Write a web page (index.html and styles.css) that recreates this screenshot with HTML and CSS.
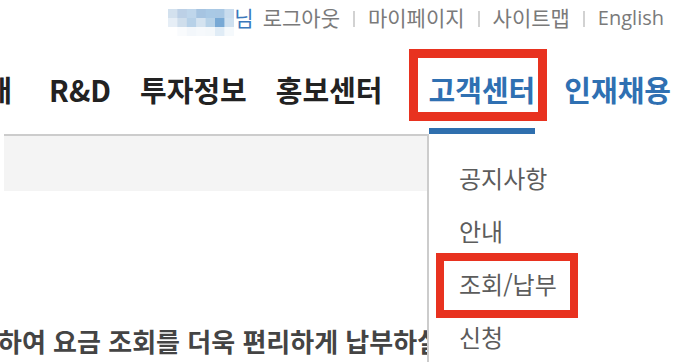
FILE: index.html
```html
<!DOCTYPE html>
<html lang="ko">
<head>
<meta charset="utf-8">
<title>고객센터</title>
<link rel="stylesheet" href="styles.css">
</head>
<body>
<div class="page">
  <div class="util">
    <span class="user">
      <svg class="mosaic" width="66" height="27" viewBox="0 0 66 27">
        <rect x="0" y="0" width="10" height="9" fill="#d3e1ee"/>
        <rect x="9.4" y="0" width="10" height="9" fill="#bcd0e6"/>
        <rect x="18.8" y="0" width="10" height="9" fill="#bfd6eb"/>
        <rect x="28.2" y="0" width="10" height="9" fill="#a6c4e1"/>
        <rect x="37.6" y="0" width="10" height="9" fill="#a9c9e5"/>
        <rect x="47" y="0" width="10" height="9" fill="#a9c8e4"/>
        <rect x="56.4" y="0" width="10" height="9" fill="#c9dcee"/>
        <rect x="0" y="9" width="10" height="9" fill="#e6eef6"/>
        <rect x="9.4" y="9" width="10" height="9" fill="#cfdeec"/>
        <rect x="18.8" y="9" width="10" height="9" fill="#b7d1e8"/>
        <rect x="28.2" y="9" width="10" height="9" fill="#d4e3f0"/>
        <rect x="37.6" y="9" width="10" height="9" fill="#b7d2e8"/>
        <rect x="47" y="9" width="10" height="9" fill="#78a9d5"/>
        <rect x="56.4" y="9" width="10" height="9" fill="#cee0f0"/>
        <rect x="9.4" y="18" width="10" height="9" fill="#f9fbfd"/>
        <rect x="18.8" y="18" width="10" height="9" fill="#f3f7fb"/>
        <rect x="28.2" y="18" width="10" height="9" fill="#f6f9fc"/>
        <rect x="37.6" y="18" width="10" height="9" fill="#f4f8fb"/>
        <rect x="47" y="18" width="10" height="9" fill="#e0ecf6"/>
        <rect x="56.4" y="18" width="10" height="9" fill="#f5f9fc"/>
      </svg><span class="nim">님</span>
    </span>
    <a class="ulink" href="#">로그아웃</a><span class="sep"></span>
    <a class="ulink" href="#">마이페이지</a><span class="sep"></span>
    <a class="ulink" href="#">사이트맵</a><span class="sep"></span>
    <a class="ulink en" href="#">English</a>
  </div>

  <nav class="gnb">
    <a class="gitem" href="#">회사소개</a>
    <a class="gitem rnd" href="#">R&amp;D</a>
    <a class="gitem" href="#">투자정보</a>
    <a class="gitem" href="#">홍보센터</a>
    <a class="gitem active" href="#">고객센터</a>
    <a class="gitem blue" href="#">인재채용</a>
  </nav>

  <div class="subbar"></div>

  <div class="content">
    <p class="lead">모바일 앱을 이용하여 요금 조회를 더욱 편리하게 납부하실 수 있습니다.</p>
  </div>

  <ul class="dropdown">
    <li><a href="#">공지사항</a></li>
    <li><a href="#">안내</a></li>
    <li><a href="#">조회/납부</a></li>
    <li><a href="#">신청</a></li>
  </ul>

  <div class="mark mark-menu"></div>
  <div class="mark mark-sub"></div>
</div>
</body>
</html>
```

FILE: styles.css
```css
html, body {
  margin: 0;
  padding: 0;
  background: #fff;
}
body {
  width: 674px;
  height: 362px;
  overflow: hidden;
  font-family: "Noto Sans CJK KR", "Noto Sans", sans-serif;
}
a { text-decoration: none; }

.page {
  position: relative;
  width: 674px;
  height: 362px;
  overflow: hidden;
}

.util {
  height: 40px;
  box-sizing: border-box;
  padding: 0 10px 5px 0;
  display: flex;
  justify-content: flex-end;
  align-items: center;
  font-size: 21px;
  color: #7a7a7a;
  line-height: 1;
}
.user {
  display: flex;
  align-items: center;
  margin-right: 9px;
}
.mosaic { display: block; margin-top: 9px; }
.nim { color: #3a78bb; }
.ulink { color: #7a7a7a; }
.en { font-family: "Open Sans", "Noto Sans", sans-serif; font-size: 20px; }
.sep {
  display: inline-block;
  width: 2px;
  height: 16px;
  background: #d2d2d2;
  margin: 2px 13px 0;
}

.gnb {
  height: 94px;
  display: flex;
  justify-content: flex-end;
  gap: 29px;
  padding-right: 3px;
  overflow: hidden;
}
.gitem {
  flex: none;
  display: flex;
  align-items: center;
  padding-top: 3px;
  box-sizing: border-box;
  height: 94px;
  font-size: 29px;
  font-weight: 700;
  color: #222;
}
.gitem.rnd { margin-left: 8px; }
.gitem.active {
  margin-left: 17px;
  color: #2f70b2;
  background: linear-gradient(#2f6fae, #2f6fae) no-repeat center bottom / 100% 6px;
}
.gitem.blue { color: #2f70b2; }

.subbar {
  margin-left: 4px;
  height: 55px;
  background: #f4f4f4;
  border-top: 2px solid #ccc;
}

.content {
  padding: 135px 0 0 4px;
}
.lead {
  margin: 0 0 0 -188px;
  white-space: nowrap;
  font-size: 26px;
  font-weight: 700;
  color: #444;
  line-height: 30px;
}

.dropdown {
  position: absolute;
  left: 427px;
  top: 134px;
  width: 260px;
  bottom: 0;
  margin: 0;
  padding: 17px 0 0 30px;
  list-style: none;
  background: #fff;
  border-left: 2px solid #ccc;
}
.dropdown li {
  height: 53px;
  line-height: 53px;
  font-size: 24px;
}
.dropdown a { color: #5c5c5c; }

.mark {
  position: absolute;
  border: 9px solid #e8321f;
  box-sizing: border-box;
}
.mark-menu {
  left: 409px;
  top: 49px;
  width: 138px;
  height: 72px;
}
.mark-sub {
  left: 436px;
  top: 253px;
  width: 142px;
  height: 65px;
  border-width: 8px;
}
```
